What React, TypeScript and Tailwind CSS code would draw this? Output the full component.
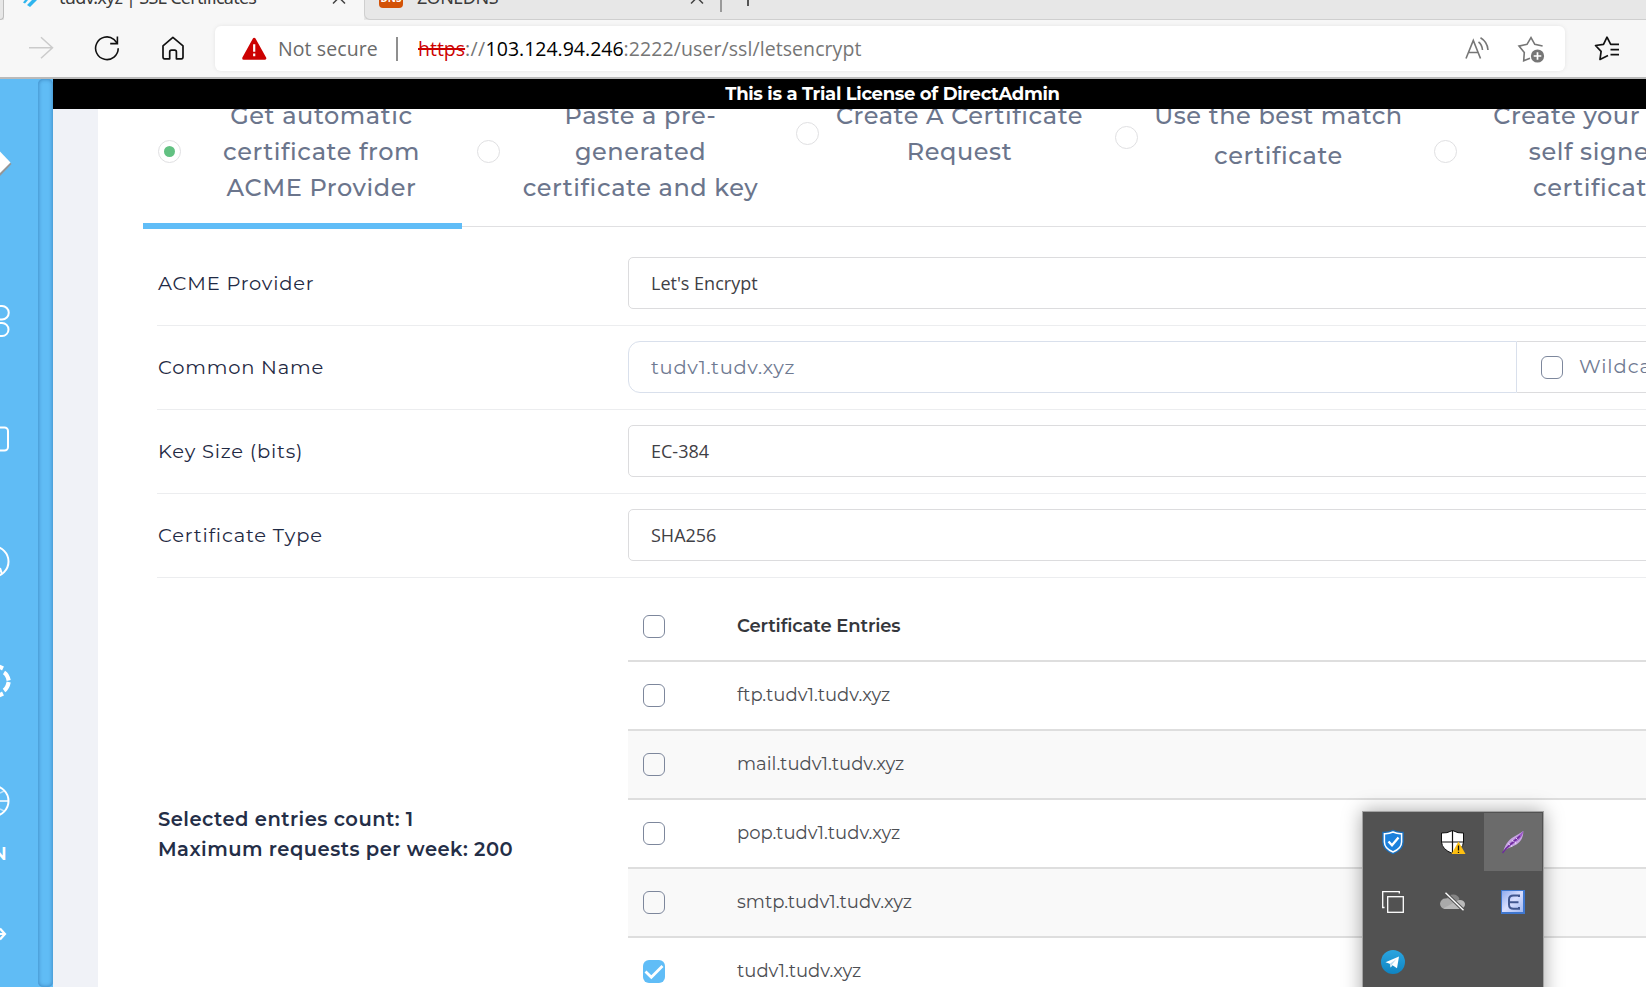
import type { ReactNode } from "react";

const entries = [
  { name: "ftp.tudv1.tudv.xyz", checked: false },
  { name: "mail.tudv1.tudv.xyz", checked: false },
  { name: "pop.tudv1.tudv.xyz", checked: false },
  { name: "smtp.tudv1.tudv.xyz", checked: false },
  { name: "tudv1.tudv.xyz", checked: true },
];

function Checkbox({ checked = false }: { checked?: boolean }) {
  if (checked) {
    return (
      <span className="flex h-[23px] w-[22px] shrink-0 items-center justify-center rounded-md bg-[#60bdf7]">
        <svg width="20" height="18" viewBox="0 0 20 18" fill="none" stroke="#fff" strokeWidth="2.8">
          <path d="M1.500 8.500L7.300 14.200L18.500 3" />
        </svg>
      </span>
    );
  }
  return <span className="h-[23px] w-[22px] shrink-0 rounded-md border border-[#7d879c]" />;
}

function BrowserTabs() {
  return (
    <div className="flex h-5 overflow-hidden bg-[#e7e7e7] font-['Noto_Sans','Open_Sans',sans-serif] text-[18px] leading-6 text-[#3b3b3b]">
      <div className="w-1 shrink-0 rounded-br-md border-r border-b border-[#bdbdbd]" />
      <div className="flex w-[360px] shrink-0 bg-[#f7f7f7]">
        <svg className="ml-[19px] shrink-0" width="18" height="8" viewBox="0 0 18 8" fill="#2fb5ee">
          <path d="M0 2.5L2 0H5L2 3.5ZM4 5L9 0H14L7 7Z" />
        </svg>
        <span className="-mt-[15px] ml-[18px] w-[199px] whitespace-nowrap tracking-[-0.74px]">tudv.xyz | SSL Certificates</span>
        <svg className="ml-[74px] shrink-0" width="14" height="5" viewBox="0 0 14 5" fill="none" stroke="#444" strokeWidth="1.5">
          <path d="M1 3.5L7 -2.5L13 3.5" />
        </svg>
      </div>
      <div className="flex h-5 flex-1 rounded-bl-md border-b border-l border-[#cfcfcf]">
        <span className="-mt-4 ml-[14px] flex h-6 w-6 items-end justify-center overflow-hidden rounded-[4px] bg-[#d35207] text-[10px] leading-[20px] font-bold text-white">DNS</span>
        <span className="-mt-[15px] ml-[14px] w-[82px] whitespace-nowrap tracking-[-0.5px]">ZONEDNS</span>
        <svg className="ml-[191px]" width="14" height="5" viewBox="0 0 14 5" fill="none" stroke="#444" strokeWidth="1.5">
          <path d="M1 3.5L7 -2.5L13 3.5" />
        </svg>
        <span className="ml-[16px] h-3 w-[2px] bg-[#9a9a9a]" />
        <span className="ml-[25px] h-[6px] w-[2px] bg-[#555]" />
      </div>
    </div>
  );
}

function AddressBar() {
  return (
    <div className="flex h-[59px] items-start border-b-2 border-[#bababa] bg-[#f7f7f7] font-['Open_Sans','Noto_Sans',sans-serif] text-[19.5px]">
      <svg className="mt-[15px] ml-7 shrink-0" width="26" height="26" viewBox="0 0 26 26" fill="none" stroke="#cbcbcb" strokeWidth="1.5">
        <path d="M1 12.7H24.5M13 2.3L24.5 12.7L13 23.3" />
      </svg>
      <svg className="mt-[15px] ml-[40px] shrink-0" width="27" height="27" viewBox="0 0 27 27" fill="none" stroke="#111" strokeWidth="1.6">
        <path d="M24.2 13.2A11.3 11.3 0 1 1 19.8 4.3L23.4 8.4" />
        <path d="M23.4 1.6V8.6H16.2" />
      </svg>
      <svg className="mt-[15px] ml-[39px] shrink-0" width="26" height="26" viewBox="0 0 26 26" fill="none" stroke="#111" strokeWidth="1.7" strokeLinejoin="round">
        <path d="M3 10.8L12.9 2.4L23 10.8V22.1Q23 23.8 21.4 23.8H16.4V16.9Q16.4 15.2 14.7 15.2H11.5Q9.7 15.2 9.7 16.9V23.8H4.6Q3 23.8 3 22.1Z" />
      </svg>
      <div className="mt-[6px] ml-[29px] flex h-[45px] w-[1350px] items-center rounded-md bg-white shadow-[0_0_4px_rgba(0,0,0,0.08)]">
        <svg className="ml-[27px] shrink-0" width="25" height="24" viewBox="0 0 25 24">
          <path d="M12.2 2.2L22.8 21.2H1.7Z" fill="#cc0202" stroke="#cc0202" strokeWidth="3" strokeLinejoin="round" />
          <path d="M12.2 7.2V14.8M12.2 16.6V19.2" stroke="#fff" strokeWidth="2.2" />
        </svg>
        <span className="ml-[11px] w-[118px] whitespace-nowrap tracking-[0.1px] text-[#6a6a6a]">Not secure</span>
        <span className="h-6 w-[2px] bg-[#8f8f8f]" />
        <span className="ml-[20px] whitespace-pre text-[#767676]">
          <span className="text-[#cc0202] line-through decoration-[1.5px]">https</span>
          <span className="tracking-[0.35px]">://</span>
          <span className="text-black">103.124.94.246</span>
          <span className="tracking-[0.08px]">:2222/user/ssl/letsencrypt</span>
        </span>
        <svg className="ml-auto shrink-0" width="26" height="26" viewBox="0 0 26 26" fill="none" stroke="#767676" strokeWidth="1.6">
          <path d="M2 22.5L9.3 4.5L16.5 22.5M4.6 16.5H14" />
          <path d="M14.5 6Q18 8.500 18.500 14M16.500 1.800Q23.500 6 24 14" />
        </svg>
        <svg className="mr-[20px] ml-[27px] shrink-0" width="28" height="28" viewBox="0 0 28 28" fill="none" stroke="#767676" strokeWidth="1.6">
          <path d="M13 23.2L6.700 25.700L7.300 17.400L2 11.100L10 9.300L14 2.500L17.800 9.300L25.600 11" />
          <circle cx="20.500" cy="21" r="6.600" fill="#767676" stroke="none" />
          <path d="M20.500 17.200V24.800M16.700 21H24.300" stroke="#fff" strokeWidth="1.700" />
        </svg>
      </div>
      <svg className="mt-[15px] ml-[28px] shrink-0" width="28" height="27" viewBox="0 0 28 27" fill="none" stroke="#111" strokeWidth="1.700">
        <path d="M15 20.500L7 24.400L8.100 16.300L2.500 10.500L10.500 9.300L14 2.200L17.700 9.300H26" strokeLinejoin="round" />
        <path d="M17.500 14.700H26M17.500 19.600H26" />
      </svg>
    </div>
  );
}

function Sidebar() {
  return (
    <aside className="flex w-[53px] shrink-0 bg-[#60bcf5]">
      <div className="flex w-[38px] flex-col text-white">
        <svg className="mt-[70px]" width="14" height="30" viewBox="0 0 14 30">
          <path d="M0 3.500L11.500 15L0 27Z" fill="#969696" />
          <path d="M0 2.500L10.500 13.500L0 24Z" fill="#fff" />
        </svg>
        <svg className="mt-[124px]" width="12" height="36" viewBox="0 0 12 36" fill="none" stroke="#fff" strokeWidth="2">
          <path d="M-3 3H2A6.500 6.500 0 0 1 2 16.500H-3M-3 33H2A6.500 6.500 0 0 0 2 20H-3" />
        </svg>
        <svg className="mt-[86px]" width="12" height="28" viewBox="0 0 12 28" fill="none" stroke="#fff" strokeWidth="2">
          <rect x="-12" y="2.500" width="20" height="23" rx="3.500" />
        </svg>
        <svg className="mt-[91px]" width="12" height="34" viewBox="0 0 12 34" fill="none" stroke="#fff" strokeWidth="2">
          <circle cx="-6.500" cy="17.500" r="15" />
          <path d="M0 24L2 30" />
        </svg>
        <svg className="mt-[84px]" width="13" height="40" viewBox="0 0 13 40" fill="none" stroke="#fff" strokeWidth="4.200">
          <path d="M-2 4L3 6.500M4 10.500Q7.500 12.500 8.700 18.500M8.700 20Q7.500 26 4 28.500M3 31.500L-2 34" />
        </svg>
        <svg className="mt-[81px]" width="12" height="34" viewBox="0 0 12 34" fill="none" stroke="#fff">
          <circle cx="-6.500" cy="18" r="15" strokeWidth="2" />
          <path d="M0 18H9" strokeWidth="1.500" />
          <path d="M0 10L4 8M0 26L4 28" strokeOpacity=".6" strokeWidth="1.500" />
        </svg>
        <span className="mt-[25px] flex w-[8px] justify-end overflow-hidden pr-[1px] font-['Montserrat','Inter',sans-serif] text-[19px] leading-6 font-semibold">EN</span>
        <svg className="mt-[59px]" width="8" height="18" viewBox="0 0 8 18" fill="none" stroke="#fff" strokeWidth="2.200">
          <path d="M0 3.500L5 9L0 14.500M0 9H5" />
        </svg>
      </div>
      <div className="w-[15px] rounded-[5px] bg-[#60bcf5] shadow-[inset_0_0_4px_rgba(0,50,110,0.45)]" />
    </aside>
  );
}

type Option = { lines: string[]; selected?: boolean; tall?: boolean };

const options: Option[] = [
  { lines: ["Get automatic", "certificate from", "ACME Provider"], selected: true },
  { lines: ["Paste a pre-", "generated", "certificate and key"] },
  { lines: ["Create A Certificate", "Request"] },
  { lines: ["Use the best match", "certificate"], tall: true },
  { lines: ["Create your own", "self signed", "certificate"] },
];

function OptionTab({ lines, selected = false, tall = false }: Option) {
  return (
    <div className={selected ? "relative z-10 h-[132px] w-[319px] shrink-0 border-b-[6px] border-[#60bdf7]" : "h-[129px] w-[319px] shrink-0"}>
      <div className="flex items-center">
        <span className="ml-[15px] flex h-[23px] w-[23px] shrink-0 items-center justify-center rounded-full border border-[#e0e0e2]">
          {selected && <span className="h-[11px] w-[11px] rounded-full bg-[#62c182]" />}
        </span>
        <div className="relative top-px ml-[12px] flex w-[257px] flex-col text-center text-[24px] font-medium tracking-[0.58px] whitespace-nowrap text-[#6b758c]">
          {lines.map((line, i) => (
            <span key={line} className={tall && i === 1 ? "leading-[44px]" : "leading-9"}>{line}</span>
          ))}
        </div>
      </div>
    </div>
  );
}

function FormRow({ label, children }: { label: string; children: ReactNode }) {
  return (
    <div className="flex h-[84px] items-center border-b border-[#ecedef]">
      <span className="w-[471px] shrink-0 pl-px text-[19.500px] tracking-[0.8px] text-[#1f2a44]">{label}</span>
      {children}
    </div>
  );
}

function SelectBox({ value }: { value: string }) {
  return (
    <div className="-mt-px flex h-[52px] flex-1 items-center rounded-[5px] border border-[#dcdcde] pt-px pl-[22px] font-['Open_Sans','Noto_Sans',sans-serif] text-[18px] text-[#3f4045]">
      {value}
    </div>
  );
}

function TrayCell({ active = false, children }: { active?: boolean; children?: ReactNode }) {
  return (
    <div className={active ? "flex h-[58px] items-center justify-center bg-[#6b6b6b]" : "flex h-[58px] items-center justify-center"}>{children}</div>
  );
}

function Tray() {
  return (
    <div className="absolute top-[811px] left-[1362px] z-20 grid h-[200px] w-[182px] grid-cols-[58px_58px_58px] content-start gap-x-[2px] gap-y-[2px] border border-[#a3a3a3] bg-[#525252] py-px pl-px shadow-[0_0_18px_rgba(0,0,0,0.35)]">
      <TrayCell>
        <svg width="24" height="26" viewBox="0 0 24 26">
          <path d="M12 1.500Q17 4 22 3.500V13Q22 20.500 12 24.500Q2 20.500 2 13V3.500Q7 4 12 1.500Z" fill="#1679d2" stroke="#1b70bd" strokeWidth="1.500" />
          <path d="M12 3Q16.500 5 20.600 4.700V13Q20.600 19.500 12 23Q3.400 19.500 3.400 13V4.700Q7.500 5 12 3Z" fill="#1b80dc" stroke="#fff" strokeWidth="1.500" />
          <path d="M7.500 12.500L11 16.200L17.500 8.500" fill="none" stroke="#fff" strokeWidth="2.400" />
        </svg>
      </TrayCell>
      <TrayCell>
        <svg width="26" height="26" viewBox="0 0 26 26">
          <path d="M12.500 1.500Q18 4.500 23.500 4V13Q23 20.500 12.500 24.500Q2 20.500 1.500 13V4Q7 4.500 12.500 1.500Z" fill="#fff" stroke="#111" />
          <path d="M12.500 1.500V24M1.500 13H23.500" stroke="#111" strokeWidth="1.200" />
          <path d="M18.500 12.500L25.500 25H11.500Z" fill="#fdbf10" />
          <path d="M18.500 16.500V21.500M18.500 22.800V24" stroke="#111" strokeWidth="1.300" />
        </svg>
      </TrayCell>
      <TrayCell active>
        <svg width="24" height="26" viewBox="0 0 24 26">
          <path d="M2.500 22C3.500 17 7 11 12.500 8C16 6 19.500 4 22.300 2C22.500 8 20 12.500 15.500 15.500C11.500 18 7 18.500 2.500 22Z" fill="#c8a5e3" />
          <path d="M22.300 2C22 5 20.500 8 18 10.500L3 22C8 13 15 10 22.300 2Z" fill="#9a55c6" />
          <path d="M1.500 24L5 19.500L19 7" stroke="#6d2c9c" strokeWidth="1.400" fill="none" />
          <path d="M7 14.500L9 16M11 11L12.500 13M15 9L16.500 10.500M11 18L10 16M15 15L14 12.500" stroke="#eadcf6" strokeWidth=".9" />
        </svg>
      </TrayCell>
      <TrayCell>
        <svg width="24" height="24" viewBox="0 0 24 24" fill="none" stroke="#fff" strokeWidth="1.300">
          <path d="M3.500 17.500H1.700V1.700H18.300V3.500" />
          <rect x="6.700" y="6.700" width="15.600" height="15.600" />
        </svg>
      </TrayCell>
      <TrayCell>
        <svg width="26" height="22" viewBox="0 0 26 22">
          <path d="M7 7.500A6.800 6.800 0 0 1 19.500 8L12 16H7Z" fill="#858585" />
          <path d="M5 18A5.200 5.200 0 0 1 5.500 7.600Q8 6.500 11 9L18 13L15 18Z" fill="#a9a9a9" />
          <path d="M3.500 17.300L17 10A5 5 0 0 1 25 12.800A4.800 4.800 0 0 1 20.500 18H5Q4 18 3.500 17.300Z" fill="#b9b9b9" />
          <path d="M5.500 1.800L23.500 19.300" stroke="#525252" strokeWidth="3.400" />
          <path d="M5.500 1.800L23.500 19.300" stroke="#fff" strokeWidth="1.400" />
        </svg>
      </TrayCell>
      <TrayCell>
        <svg width="24" height="24" viewBox="0 0 24 24">
          <defs>
            <linearGradient id="tile" x1="0" y1="0" x2="1" y2="1">
              <stop offset="0" stopColor="#8fabef" />
              <stop offset=".5" stopColor="#d9defe" />
              <stop offset="1" stopColor="#a0b8f0" />
            </linearGradient>
          </defs>
          <rect width="24" height="24" fill="#3f77cf" />
          <rect x="1" y="1" width="21" height="21" fill="url(#tile)" />
          <path d="M18 7V5.500H12.500Q8 5.500 8 9.500V14.500Q8 18.800 12.500 18.800H18V17M7 12.200H17.500" fill="none" stroke="#41568f" strokeWidth="2" />
        </svg>
      </TrayCell>
      <TrayCell>
        <svg width="24" height="24" viewBox="0 0 24 24">
          <defs>
            <linearGradient id="plane" x1="0" y1="0" x2="0" y2="1">
              <stop offset="0" stopColor="#2ba5e0" />
              <stop offset="1" stopColor="#0f84c2" />
            </linearGradient>
          </defs>
          <circle cx="12" cy="12" r="12" fill="url(#plane)" />
          <path d="M4.500 12.300L18 6.600L16 18.300L11.500 15.300L9.700 17.500L8.800 13.700Z" fill="#fff" />
          <path d="M8.900 13.700L15.500 9L10.800 14.800L9.700 17.500Z" fill="#b9dcf2" />
        </svg>
      </TrayCell>
    </div>
  );
}

export default function App() {
  return (
    <div className="relative flex h-[987px] w-[1646px] flex-col overflow-hidden bg-white">
      <BrowserTabs />
      <AddressBar />
      <div className="flex min-h-0 flex-1 font-['Montserrat','Inter',sans-serif]">
        <Sidebar />
        <div className="flex min-w-0 flex-1 flex-col">
          <div className="flex h-[30px] shrink-0 items-center justify-center bg-black pl-[86px] text-[18px] font-bold tracking-[-0.320px] text-white">
            This is a Trial License of DirectAdmin
          </div>
          <div className="flex min-h-0 flex-1 bg-[#f0f2f7] pl-[45px]">
            <main className="min-w-0 flex-1 overflow-hidden bg-white">
              <div className="-mt-3 ml-[45px] flex h-[130px] border-b border-[#e0e0e2]">
                {options.map((option) => (
                  <OptionTab key={option.lines[0]} {...option} />
                ))}
              </div>
              <div className="-mr-16 ml-[59px] pt-[15px]">
                <FormRow label="ACME Provider">
                  <SelectBox value="Let's Encrypt" />
                </FormRow>
                <FormRow label="Common Name">
                  <div className="-mt-px flex h-[52px] w-[889px] shrink-0 items-center rounded-l-xl border border-[#d9e0ec] pt-px pl-[22px] text-[19.500px] tracking-[0.68px] text-[#6f7a92]">
                    tudv1.tudv.xyz
                  </div>
                  <div className="-mt-px flex h-[52px] flex-1 items-center border-y border-[#dcdcde] pl-6 text-[19.500px] tracking-[0.9px] whitespace-nowrap text-[#6f7a92]">
                    <Checkbox />
                    <span className="ml-4">Wildcard</span>
                  </div>
                </FormRow>
                <FormRow label="Key Size (bits)">
                  <SelectBox value="EC-384" />
                </FormRow>
                <FormRow label="Certificate Type">
                  <SelectBox value="SHA256" />
                </FormRow>
                <div className="flex">
                  <div className="w-[471px] shrink-0 pt-[226px] pl-px text-[19.500px] leading-[30px] font-semibold tracking-[0.48px] text-[#242e47]">
                    <p>Selected entries count: 1</p>
                    <p>Maximum requests per week: 200</p>
                  </div>
                  <div className="flex-1 pt-[15px] text-[18px] text-[#4c4e53]">
                    <div className="flex h-[69px] items-center border-b-2 border-[#dedede] pl-[15px]">
                      <Checkbox />
                      <span className="ml-[72px] font-semibold tracking-[-0.150px] text-[#35373c]">Certificate Entries</span>
                    </div>
                    {entries.map((entry) => (
                      <div key={entry.name} className="flex h-[69px] items-center border-b-2 border-[#dedede] pl-[15px] odd:bg-[#f9f9f9]">
                        <Checkbox checked={entry.checked} />
                        <span className="ml-[72px]">{entry.name}</span>
                      </div>
                    ))}
                  </div>
                </div>
              </div>
            </main>
          </div>
        </div>
      </div>
      <Tray />
    </div>
  );
}
